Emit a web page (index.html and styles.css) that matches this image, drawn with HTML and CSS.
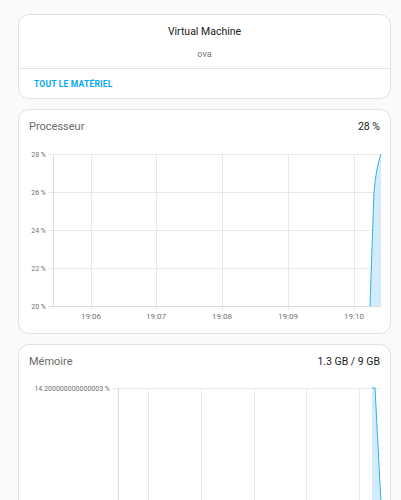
FILE: index.html
```html
<!DOCTYPE html>
<html lang="fr">
<head>
<meta charset="utf-8">
<link rel="stylesheet" href="styles.css">
</head>
<body>
<div class="page">
  <section class="card info">
    <div class="info-body">
      <div class="name">Virtual Machine</div>
      <div class="sub">ova</div>
    </div>
    <div class="actions"><span class="link">TOUT LE MATÉRIEL</span></div>
  </section>

  <section class="card">
    <div class="head"><span class="label">Processeur</span><span class="value">28 %</span></div>
    <svg class="chart cpu" width="373" height="190" viewBox="0 0 373 190">
      <g class="grid">
        <line x1="30" y1="11" x2="363" y2="11"/>
        <line x1="30" y1="49" x2="363" y2="49"/>
        <line x1="30" y1="87" x2="363" y2="87"/>
        <line x1="30" y1="125" x2="363" y2="125"/>
        <line x1="73" y1="11" x2="73" y2="167"/>
        <line x1="138" y1="11" x2="138" y2="167"/>
        <line x1="204" y1="11" x2="204" y2="167"/>
        <line x1="270" y1="11" x2="270" y2="167"/>
        <line x1="336" y1="11" x2="336" y2="167"/>
      </g>
      <g class="axis">
        <line x1="35" y1="11" x2="35" y2="163"/>
        <line x1="30" y1="163" x2="363" y2="163"/>
      </g>
      <path class="area" d="M352,163 L356,49 Q358,25 363,11 L363,163 Z"/>
      <path class="line" d="M352,163 L356,49 Q358,25 363,11"/>
      <g class="ylab">
        <text x="28" y="14">28 %</text>
        <text x="28" y="52">26 %</text>
        <text x="28" y="90">24 %</text>
        <text x="28" y="128">22 %</text>
        <text x="28" y="166">20 %</text>
      </g>
      <g class="xlab">
        <text x="73" y="176">19:06</text>
        <text x="138" y="176">19:07</text>
        <text x="204" y="176">19:08</text>
        <text x="270" y="176">19:09</text>
        <text x="336" y="176">19:10</text>
      </g>
    </svg>
  </section>

  <section class="card mem">
    <div class="head"><span class="label">Mémoire</span><span class="value">1.3 GB / 9 GB</span></div>
    <svg class="chart" width="373" height="150" viewBox="0 0 373 150">
      <g class="grid">
        <line x1="94" y1="10" x2="363" y2="10"/>
        <line x1="130" y1="10" x2="130" y2="150"/>
        <line x1="183" y1="10" x2="183" y2="150"/>
        <line x1="236" y1="10" x2="236" y2="150"/>
        <line x1="288" y1="10" x2="288" y2="150"/>
        <line x1="341" y1="10" x2="341" y2="150"/>
      </g>
      <g class="axis">
        <line x1="100" y1="10" x2="100" y2="150"/>
      </g>
      <path class="area" d="M354,150 L354,10 L357,10 L363,125 L363,150 Z"/>
      <path class="line" d="M354,10 L357,10 L363,125"/>
      <g class="ylab">
        <text x="92" y="13">14.200000000000003 %</text>
      </g>
    </svg>
  </section>
</div>
</body>
</html>
```

FILE: styles.css
```css
html, body {
  margin: 0;
  padding: 0;
  background: #fafafa;
  font-family: Roboto, "Noto Sans", sans-serif;
}
.page {
  display: flex;
  flex-direction: column;
  gap: 10px;
  padding: 14px 10px 0 18px;
}
.card {
  background: #ffffff;
  border: 1px solid #e2e2e2;
  border-radius: 11px;
  width: 371px;
  overflow: hidden;
}
.info-body {
  height: 53px;
  display: flex;
  flex-direction: column;
  align-items: center;
}
.name {
  margin-top: 10px;
  font-size: 10.5px;
  color: #212121;
  line-height: 14px;
}
.sub {
  margin-top: 9px;
  font-size: 9px;
  color: #727272;
  line-height: 12px;
}
.actions {
  border-top: 1px solid #e6e6e6;
  height: 29px;
  display: flex;
  align-items: center;
  padding-left: 15px;
}
.link {
  font-size: 8.5px;
  font-weight: 700;
  letter-spacing: 0.2px;
  color: #03a9f4;
  margin-top: 1px;
}
.head {
  display: flex;
  justify-content: space-between;
  align-items: center;
  height: 33px;
  padding: 0 10px 0 10px;
}
.label {
  font-size: 11px;
  color: #6b6b6b;
}
.value {
  font-size: 10.5px;
  color: #212121;
}
.chart {
  display: block;
  margin-left: -1px;
}
.grid line {
  stroke: #e8e8e8;
  stroke-width: 1;
  shape-rendering: crispEdges;
}
.axis line {
  stroke: #dcdcdc;
  stroke-width: 1;
  shape-rendering: crispEdges;
}
.area {
  fill: #d3ecfb;
  stroke: none;
}
.line {
  fill: none;
  stroke: #2eb0f0;
  stroke-width: 1;
}
.ylab text {
  font-family: Roboto, sans-serif;
  font-size: 7px;
  fill: #707070;
  text-anchor: end;
}
.xlab text {
  font-family: Roboto, sans-serif;
  font-size: 8px;
  fill: #707070;
  text-anchor: middle;
}
```
